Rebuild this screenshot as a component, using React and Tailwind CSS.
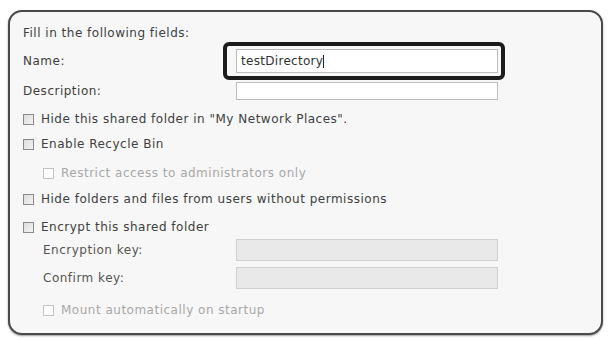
import React from 'react';

const Check = ({ disabled }) => (
  <span
    className={
      disabled
        ? 'w-[11px] h-[11px] shrink-0 border border-[#c4c4c4] bg-white'
        : 'w-[11px] h-[11px] shrink-0 border border-[#8a8a8a] bg-gradient-to-br from-[#dcdcdc] to-[#f4f4f4]'
    }
  />
);

const CheckRow = ({ label, disabled, indent, className = '' }) => (
  <div className={`flex items-center h-[20px] ${indent ? 'pl-[20px]' : ''} ${className}`}>
    <Check disabled={disabled} />
    <span className={`ml-[7px] ${disabled ? 'text-[#a8a8a8]' : 'text-[#404040]'}`}>{label}</span>
  </div>
);

export default function App() {
  return (
    <div className="w-[609px] h-[340px] bg-white pt-[10px] pl-[8px]" style={{ fontFamily: '"DejaVu Sans", Verdana, sans-serif' }}>
      <div className="w-[595px] h-[325px] rounded-[14px] border-2 border-[#4a4a4a] bg-[#f7f7f7] shadow-[0_1px_2px_rgba(0,0,0,0.4)] pl-[13px] pt-[12px] text-[12px] tracking-[0.5px] text-[#404040]">
        <div className="h-[18px] flex items-center">Fill in the following fields:</div>

        <div className="mt-[7px] flex items-center h-[24px]">
          <span className="w-[213px]">Name:</span>
          <div className="relative">
            <div className="absolute left-[-13px] top-[-7px] w-[282px] h-[38px] border-[4px] border-[#1c1c1c] rounded-[6px]" />
            <div className="w-[262px] h-[24px] border border-[#bdbdbd] bg-white flex items-center pl-[4px] text-[#333] tracking-[0.3px]">
              testDirectory<span className="w-px h-[13px] bg-[#222]" />
            </div>
          </div>
        </div>

        <div className="mt-[9px] flex items-center h-[18px]">
          <span className="w-[213px]">Description:</span>
          <div className="w-[262px] h-[18px] border border-[#bdbdbd] bg-white" />
        </div>

        <CheckRow className="mt-[9px]" label={'Hide this shared folder in "My Network Places".'} />
        <CheckRow className="mt-[5px]" label="Enable Recycle Bin" />
        <CheckRow className="mt-[9px]" indent disabled label="Restrict access to administrators only" />
        <CheckRow className="mt-[6px]" label="Hide folders and files from users without permissions" />
        <CheckRow className="mt-[8px]" label="Encrypt this shared folder" />

        <div className="mt-[2px] flex items-center h-[22px]">
          <span className="w-[213px] pl-[20px] text-[#555]">Encryption key:</span>
          <div className="w-[262px] h-[22px] border border-[#cfcfcf] bg-[#e9e9e9]" />
        </div>
        <div className="mt-[6px] flex items-center h-[22px]">
          <span className="w-[213px] pl-[20px] text-[#555]">Confirm key:</span>
          <div className="w-[262px] h-[22px] border border-[#cfcfcf] bg-[#e9e9e9]" />
        </div>

        <CheckRow className="mt-[11px]" indent disabled label="Mount automatically on startup" />
      </div>
    </div>
  );
}
